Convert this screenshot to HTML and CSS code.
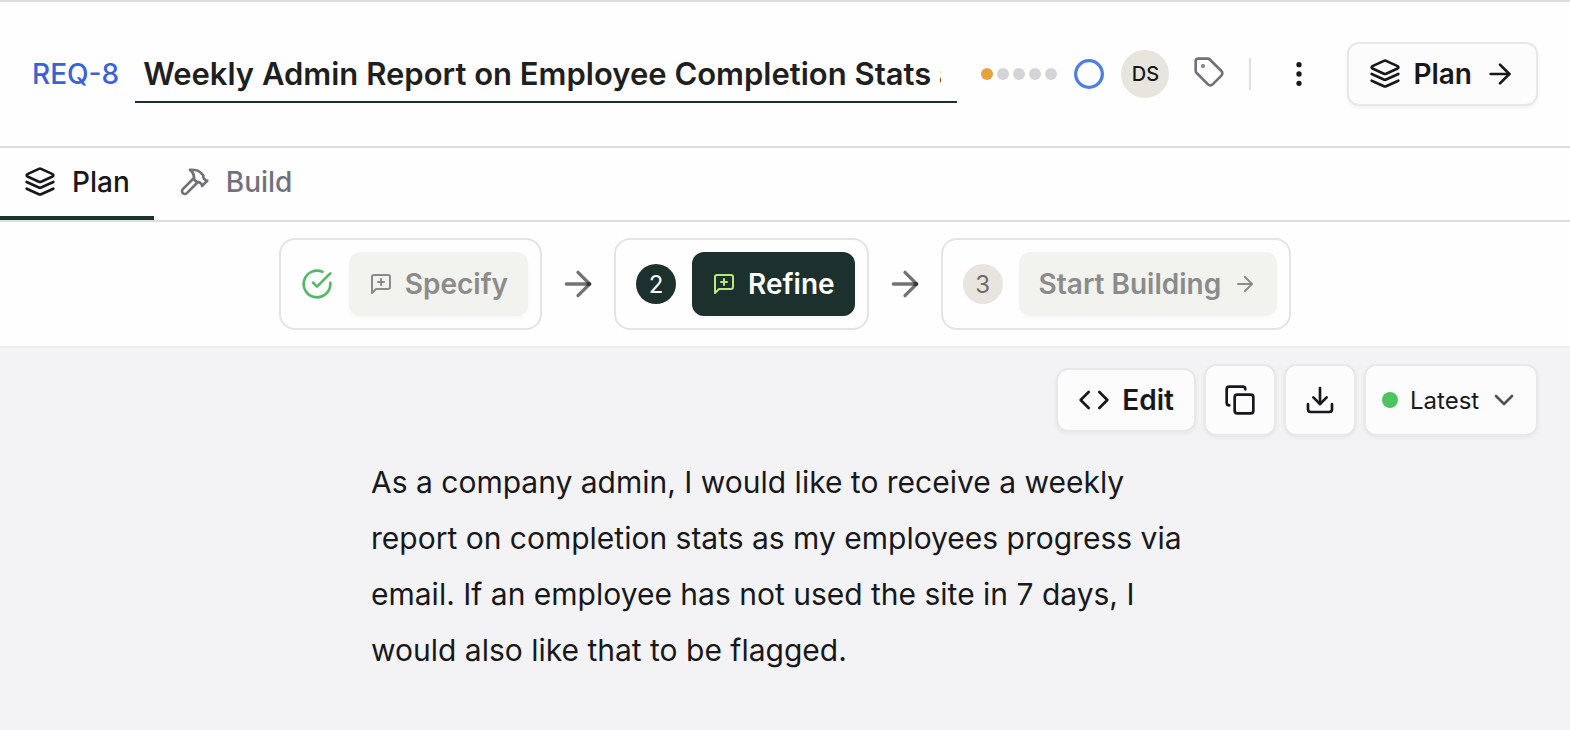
FILE: index.html
```
<!DOCTYPE html>
<html lang="en">
  <head>
    <meta charset="utf-8">
    <meta name="viewport" content="width=device-width, initial-scale=1">
    <title>REQ-8</title>
    <link rel="stylesheet" href="styles.css">
  </head>

  <body>
    <!-- shared icons -->
    <svg class="icon-defs" aria-hidden="true">
      <symbol id="icon-layers" viewBox="0 0 24 24">
        <path d="m12.83 2.18a2 2 0 0 0-1.66 0L2.6 6.08a1 1 0 0 0 0 1.83l8.58 3.91a2 2 0 0 0 1.66 0l8.58-3.9a1 1 0 0 0 0-1.83Z" />
        <path d="m22 12-9.17 4.16a2 2 0 0 1-1.66 0L2 12" />
        <path d="m22 17-9.17 4.16a2 2 0 0 1-1.66 0L2 17" />
      </symbol>
      <symbol id="icon-arrow" viewBox="0 0 24 24">
        <path d="M5 12h14" />
        <path d="m12 5 7 7-7 7" />
      </symbol>
      <symbol id="icon-message" viewBox="0 0 24 24">
        <path d="M21 15a2 2 0 0 1-2 2H7l-4 4V5a2 2 0 0 1 2-2h14a2 2 0 0 1 2 2z" />
        <path d="M12 7v6" />
        <path d="M9 10h6" />
      </symbol>
    </svg>

    <header class="header">
      <a class="req-id" href="#">REQ-8</a>
      <input class="title-input" type="text" aria-label="Title" value="Weekly Admin Report on Employee Completion Stats and Inactivity">
      <div class="header-actions">
        <div class="dots">
          <span class="dot dot-active"></span>
          <span class="dot"></span>
          <span class="dot"></span>
          <span class="dot"></span>
          <span class="dot"></span>
        </div>
        <button class="icon-btn status-btn" type="button" aria-label="Status">
          <svg class="icon" viewBox="0 0 24 24"><circle cx="12" cy="12" r="10" /></svg>
        </button>
        <button class="avatar" type="button">DS</button>
        <button class="icon-btn tag-btn" type="button" aria-label="Tags">
          <svg class="icon" viewBox="0 0 24 24">
            <path d="M12.586 2.586A2 2 0 0 0 11.172 2H4a2 2 0 0 0-2 2v7.172a2 2 0 0 0 .586 1.414l8.704 8.704a2.426 2.426 0 0 0 3.42 0l6.58-6.58a2.426 2.426 0 0 0 0-3.42z" />
            <circle cx="7.5" cy="7.5" r=".5" fill="currentColor" />
          </svg>
        </button>
        <span class="separator"></span>
        <button class="icon-btn more-btn" type="button" aria-label="More">
          <svg class="icon" viewBox="0 0 24 24">
            <circle cx="12" cy="12" r="1" />
            <circle cx="12" cy="5" r="1" />
            <circle cx="12" cy="19" r="1" />
          </svg>
        </button>
        <button class="btn" type="button">
          <svg class="icon"><use href="#icon-layers" /></svg>
          Plan
          <svg class="icon"><use href="#icon-arrow" /></svg>
        </button>
      </div>
    </header>

    <nav class="tabs">
      <a class="tab tab-active" href="#">
        <svg class="icon"><use href="#icon-layers" /></svg>
        Plan
      </a>
      <a class="tab" href="#">
        <svg class="icon" viewBox="0 0 24 24">
          <path d="m15 12-8.373 8.373a1 1 0 1 1-3-3L12 9" />
          <path d="m18 15 4-4" />
          <path d="m21.5 11.5-1.914-1.914A2 2 0 0 1 19 8.172V7l-2.26-2.26a6 6 0 0 0-4.202-1.756L9 2.96l.92.82A6.18 6.18 0 0 1 12 8.4V10l2 2h1.172a2 2 0 0 1 1.414.586L18.5 14.5" />
        </svg>
        Build
      </a>
    </nav>

    <div class="steps">
      <div class="step">
        <svg class="icon step-done" viewBox="0 0 24 24">
          <path d="M22 11.08V12a10 10 0 1 1-5.93-9.14" />
          <path d="m9 11 3 3L22 4" />
        </svg>
        <button class="btn step-btn" type="button" disabled>
          <svg class="icon icon-small"><use href="#icon-message" /></svg>
          Specify
        </button>
      </div>
      <svg class="icon step-arrow"><use href="#icon-arrow" /></svg>
      <div class="step">
        <span class="step-number step-number-active">2</span>
        <button class="btn step-btn step-btn-active" type="button">
          <svg class="icon icon-small"><use href="#icon-message" /></svg>
          Refine
        </button>
      </div>
      <svg class="icon step-arrow"><use href="#icon-arrow" /></svg>
      <div class="step">
        <span class="step-number">3</span>
        <button class="btn step-btn" type="button" disabled>
          Start Building
          <svg class="icon icon-small"><use href="#icon-arrow" /></svg>
        </button>
      </div>
    </div>

    <main class="content">
      <div class="toolbar">
        <button class="btn" type="button">
          <svg class="icon" viewBox="0 0 24 24">
            <path d="m16 18 6-6-6-6" />
            <path d="m8 6-6 6 6 6" />
          </svg>
          Edit
        </button>
        <button class="btn btn-square" type="button" aria-label="Copy">
          <svg class="icon" viewBox="0 0 24 24">
            <rect x="8" y="8" width="14" height="14" rx="2" />
            <path d="M4 16c-1.1 0-2-.9-2-2V4c0-1.1.9-2 2-2h10c1.1 0 2 .9 2 2" />
          </svg>
        </button>
        <button class="btn btn-square" type="button" aria-label="Download">
          <svg class="icon" viewBox="0 0 24 24">
            <path d="M21 15v4a2 2 0 0 1-2 2H5a2 2 0 0 1-2-2v-4" />
            <path d="m7 10 5 5 5-5" />
            <path d="M12 15V3" />
          </svg>
        </button>
        <label class="btn version">
          <span class="version-dot"></span>
          <select class="version-select" aria-label="Version">
            <option>Latest</option>
          </select>
          <svg class="icon version-chevron" viewBox="0 0 24 24"><path d="m6 9 6 6 6-6" /></svg>
        </label>
      </div>
      <p class="description">
        As a company admin, I would like to receive a weekly report on
        completion stats as my employees progress via email. If an employee has
        not used the site in 7 days, I would also like that to be flagged.
      </p>
    </main>
  </body>
</html>
```

FILE: styles.css
```
* {
  box-sizing: border-box;
}

body {
  margin: 0;
  min-height: 100vh;
  display: flex;
  flex-direction: column;
  background: #fefefe;
  color: #18181b;
  font-family: Inter, "Liberation Sans", sans-serif;
  font-size: 28px;
}

button,
input,
select {
  font-family: inherit;
  color: inherit;
}

a {
  text-decoration: none;
}

/* icons */
.icon-defs {
  display: none;
}

.icon {
  width: 32px;
  height: 32px;
  flex-shrink: 0;
  display: block;
  fill: none;
  stroke: currentColor;
  stroke-width: 2;
  stroke-linecap: round;
  stroke-linejoin: round;
}

.icon-small {
  width: 24px;
  height: 24px;
}

/* header */
.header {
  height: 148px;
  display: flex;
  align-items: center;
  gap: 16px;
  padding: 0 32px;
  border-top: 2px solid #dcdedd;
  border-bottom: 2px solid #dcdedd;
}

.req-id {
  color: #3a62d8;
  font-weight: 500;
}

.title-input {
  flex: 1;
  min-width: 0;
  height: 58px;
  padding: 0 16px 0 8px;
  border: 0;
  border-bottom: 2px solid #1c302d;
  background: none;
  color: #1f1f1f;
  font-size: 31px;
  font-weight: 600;
  outline: none;
}

.header-actions {
  display: flex;
  align-items: center;
  gap: 16px;
  margin-left: 8px;
}

.dots {
  display: flex;
  gap: 4px;
}

.dot {
  width: 12px;
  height: 12px;
  border-radius: 50%;
  background: #d4d4d8;
}

.dot-active {
  background: #e6a23c;
}

.icon-btn {
  padding: 0;
  border: 0;
  background: none;
  cursor: pointer;
}

.status-btn {
  color: #4f7fe3;
}

.status-btn .icon {
  stroke-width: 2.5;
}

.avatar {
  width: 48px;
  height: 48px;
  padding: 0;
  border: 0;
  border-radius: 50%;
  background: #e8e5df;
  font-size: 20px;
  font-weight: 500;
}

.tag-btn {
  padding: 0 8px 4px;
  color: #71717a;
}

.separator {
  width: 2px;
  height: 32px;
  background: #dcdedd;
}

.more-btn {
  padding: 0 16px;
}

/* buttons */
.btn {
  height: 64px;
  display: flex;
  align-items: center;
  gap: 12px;
  padding: 0 20px;
  border: 2px solid #e8e8e9;
  border-radius: 12px;
  background: #fcfcfc;
  box-shadow: 0 2px 4px rgba(0, 0, 0, 0.05);
  font-size: 28px;
  font-weight: 600;
  cursor: pointer;
}

.btn-square {
  width: 72px;
  height: 72px;
  justify-content: center;
  padding: 0;
}

/* tabs */
.tabs {
  height: 74px;
  display: flex;
  border-bottom: 2px solid #dcdedd;
}

.tab {
  display: flex;
  align-items: center;
  gap: 16px;
  padding: 0 24px;
  border-bottom: 4px solid transparent;
  color: #71717a;
  font-weight: 500;
}

.tab-active {
  border-bottom-color: #1c302d;
  color: #18181b;
}

/* steps */
.steps {
  display: flex;
  align-items: center;
  justify-content: center;
  gap: 16px;
  padding: 16px;
  border-bottom: 2px solid #ececed;
}

.step {
  display: flex;
  align-items: center;
  gap: 16px;
  padding: 12px 12px 12px 20px;
  border: 2px solid #e4e4e5;
  border-radius: 16px;
}

.step-done {
  color: #55b868;
}

.step-number {
  width: 40px;
  height: 40px;
  display: flex;
  align-items: center;
  justify-content: center;
  border-radius: 50%;
  background: #e8e5df;
  color: #6b6b6e;
  font-size: 24px;
}

.step-number-active {
  background: #1c302d;
  color: #fff;
}

.step-btn {
  border: 0;
  background: #f2f2ef;
  color: #8b8b8b;
  box-shadow: 0 2px 4px rgba(0, 0, 0, 0.03);
}

.step-btn-active {
  background: #1c302d;
  color: #fff;
}

.step-btn-active .icon {
  color: #b9e67e;
}

.step-arrow {
  width: 40px;
  height: 40px;
  stroke: rgba(0, 0, 0, 0.55);
}

/* content */
.content {
  flex: 1;
  background: #f3f3f6;
}

.toolbar {
  display: flex;
  align-items: center;
  justify-content: flex-end;
  gap: 8px;
  padding: 16px 32px 18px;
}

.version {
  height: 72px;
  gap: 8px;
  padding: 0 16px;
}

.version-dot {
  width: 16px;
  height: 16px;
  border-radius: 50%;
  background: #4fc35f;
}

.version-select {
  appearance: none;
  padding: 0 0 0 4px;
  border: 0;
  background: none;
  font-size: 24px;
  outline: none;
}

.version-chevron {
  color: #52525b;
}

.description {
  max-width: 828px;
  margin: 0 auto;
  font-size: 30px;
  line-height: 56px;
}
```
